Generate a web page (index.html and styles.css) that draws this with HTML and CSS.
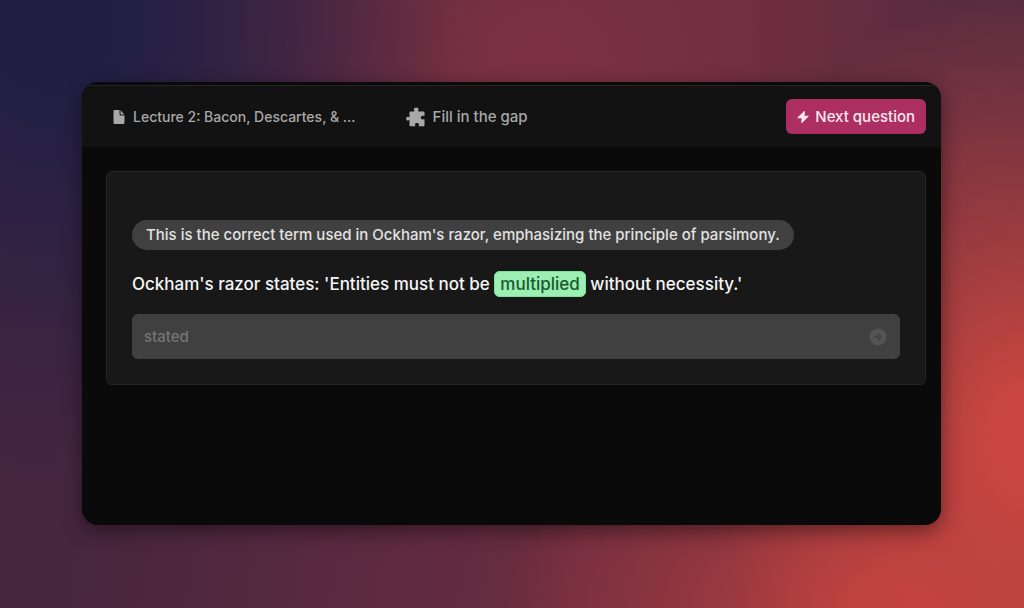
FILE: index.html
```html
<!DOCTYPE html>
<html lang="en">
<head>
    <meta charset="UTF-8">
    <meta name="viewport" content="width=device-width, initial-scale=1.0">
    <title>Fill in the gap</title>
    <link rel="stylesheet" href="styles.css">
</head>
<body>

    <div class="window">
        <header class="header">
            <div class="lecture">
                <svg class="icon-file" viewBox="0 0 12 14" aria-hidden="true">
                    <path d="M1.500 0H6.500v4A1.500 1.500 0 0 0 8 5.500h3.500v7A1.500 1.500 0 0 1 10 14H2A1.500 1.500 0 0 1 .5 12.500v-11A1.500 1.500 0 0 1 1.500 0z"/>
                    <path d="M7.500.3L11.300 4.500H8.200a.7.7 0 0 1-.7-.7z"/>
                </svg>
                <span>Lecture 2: Bacon, Descartes, &amp; ...</span>
            </div>
            <div class="mode">
                <svg class="icon-puzzle" viewBox="0 0 20 20" aria-hidden="true">
                    <path d="M4.500 4.500H7.800c.6 0 .8-.4.4-.9-.3-.3-.4-.700-.4-1.100C7.800 1.300 8.700.5 10.200.5s2.400.8 2.400 2c0 .4-.1.800-.4 1.100-.4.500-.2.900.4.900H17.500c.6 0 1 .4 1 1v3c0 .6-.4.800-.9.500-.3-.2-.6-.3-1-.3-1.100 0-1.800.8-1.800 1.900s.7 1.900 1.800 1.900c.4 0 .7-.1 1-.3.500-.3.900-.1.900.5V18.300c0 .6-.4 1-1 1h-4.300c-.6 0-.7-.4-.4-.8.2-.3.3-.6.3-1 0-1-.9-1.600-2.100-1.600s-2.100.6-2.100 1.600c0 .4.100.700.300 1 .3.400.2.8-.4.8H4.500c-.6 0-1-.4-1-1V13.700c0-.6-.4-.8-.8-.4-.3.200-.6.300-1 .3C.7 13.600.1 12.800.1 11.700s.6-1.900 1.600-1.900c.4 0 .7.100 1 .3.400.400.8.200.8-.4V5.500c0-.6.4-1 1-1z"/>
                </svg>
                <span>Fill in the gap</span>
            </div>
            <button type="button" class="next">
                <svg class="icon-bolt" viewBox="0 0 12 14" aria-hidden="true">
                    <path d="M7.200 1.100L.5 7.400c-.3.400-.1.900.4.900H4.600L4.200 12.600c0 .5.400.7.800.4L11.600 6.600c.3-.4.1-.9-.4-.9H7.500L8 1.400c0-.5-.400-.7-.8-.3z"/>
                </svg>
                Next question
            </button>
        </header>

        <main class="content">
            <form class="card">
                <p class="hint">This is the correct term used in Ockham's razor, emphasizing the principle of parsimony.</p>
                <label class="question" for="answer">Ockham's razor states: 'Entities must not be <mark class="gap">multiplied</mark> without necessity.'</label>
                <div class="answer">
                    <input type="text" id="answer" value="stated" disabled>
                    <button type="submit" class="submit" aria-label="Submit answer" disabled>
                        <svg class="icon-submit" viewBox="0 0 18 18" aria-hidden="true">
                            <circle cx="9" cy="9" r="8.500"/>
                            <path d="M5.500 9h6.500M9.500 6.500l2.500 2.500-2.500 2.500"/>
                        </svg>
                    </button>
                </div>
            </form>
        </main>
    </div>

</body>
</html>
```
FILE: styles.css
```css
* {
    box-sizing: border-box;
}
body {
    display: flex;
    min-height: 100vh;
    margin: 0;
    padding: 82px 83px 83px 82px;
    font-family: Inter, "Liberation Sans", sans-serif;
    font-size: 15px;
    font-weight: 500;
    line-height: 20px;
    color: #a8a8a8;
    background:
        radial-gradient(ellipse 40% 75% at 5% 4%, #221f45 15%, transparent),
        radial-gradient(ellipse 38% 60% at 53% 10%, #7b3141 5%, transparent),
        radial-gradient(ellipse 30% 75% at 100% 72%, #c94640 10%, transparent),
        radial-gradient(ellipse 38% 36% at 87% 100%, #b93f3f 10%, transparent),
        linear-gradient(100deg, #46263f 15%, #6c2d40 60%, #4c2b3f);
}
.window {
    display: flex;
    flex: 1;
    flex-direction: column;
    min-width: 0;
    padding-top: 3px;
    overflow: hidden;
    background-color: #0a0a0a;
    border-radius: 16px;
    box-shadow: 0 6px 20px rgba(0, 0, 0, 0.45);
}
.header {
    display: flex;
    align-items: center;
    padding: 13px 15px 13px 31px;
    background-color: #121212;
    border-top: 1px solid #242424;
}
.lecture, .mode {
    display: flex;
    align-items: center;
    gap: 8px;
    white-space: nowrap;
}
.lecture {
    font-size: 14px;
}
.mode {
    gap: 7px;
    margin-left: 50px;
}
svg {
    display: block;
    flex: none;
    fill: currentColor;
}
.icon-file {
    width: 12px;
    height: 14px;
}
.icon-puzzle {
    width: 20px;
    height: 20px;
}
.icon-bolt {
    width: 12px;
    height: 14px;
}
button, input {
    font: inherit;
    color: inherit;
    border: none;
}
.next {
    display: flex;
    align-items: center;
    gap: 6px;
    height: 35px;
    margin-left: auto;
    padding: 0 11px;
    white-space: nowrap;
    color: #fbe8f0;
    background-color: #ad2e60;
    border-radius: 6px;
    cursor: pointer;
}
.content {
    padding: 24px 15px 24px 24px;
}
.card {
    display: flex;
    flex-direction: column;
    align-items: flex-start;
    padding: 48px 25px 25px;
    background-color: #181818;
    border: 1px solid #262626;
    border-radius: 6px;
}
.hint {
    margin: 0;
    padding: 5px 14px;
    color: #e2e2e2;
    background-color: #404040;
    border-radius: 15px;
}
.question {
    margin: 20px 0 16px;
    font-size: 17px;
    line-height: 28px;
    color: #f5f5f5;
}
.gap {
    padding: 2px 5px;
    color: #1a5a30;
    background-color: #9cefb2;
    border: 1px solid #7fe09a;
    border-radius: 6px;
}
.answer {
    display: flex;
    align-items: center;
    width: 100%;
    height: 45px;
    padding: 0 13px 0 12px;
    color: #757575;
    background-color: #404040;
    border-radius: 6px;
}
.answer input {
    flex: 1;
    min-width: 0;
    padding: 0;
    background: none;
    outline: none;
}
.submit {
    padding: 0;
    color: #545454;
    background: none;
}
.icon-submit {
    width: 18px;
    height: 18px;
}
.icon-submit path {
    fill: none;
    stroke: #444444;
    stroke-width: 2;
    stroke-linecap: round;
    stroke-linejoin: round;
}
```
